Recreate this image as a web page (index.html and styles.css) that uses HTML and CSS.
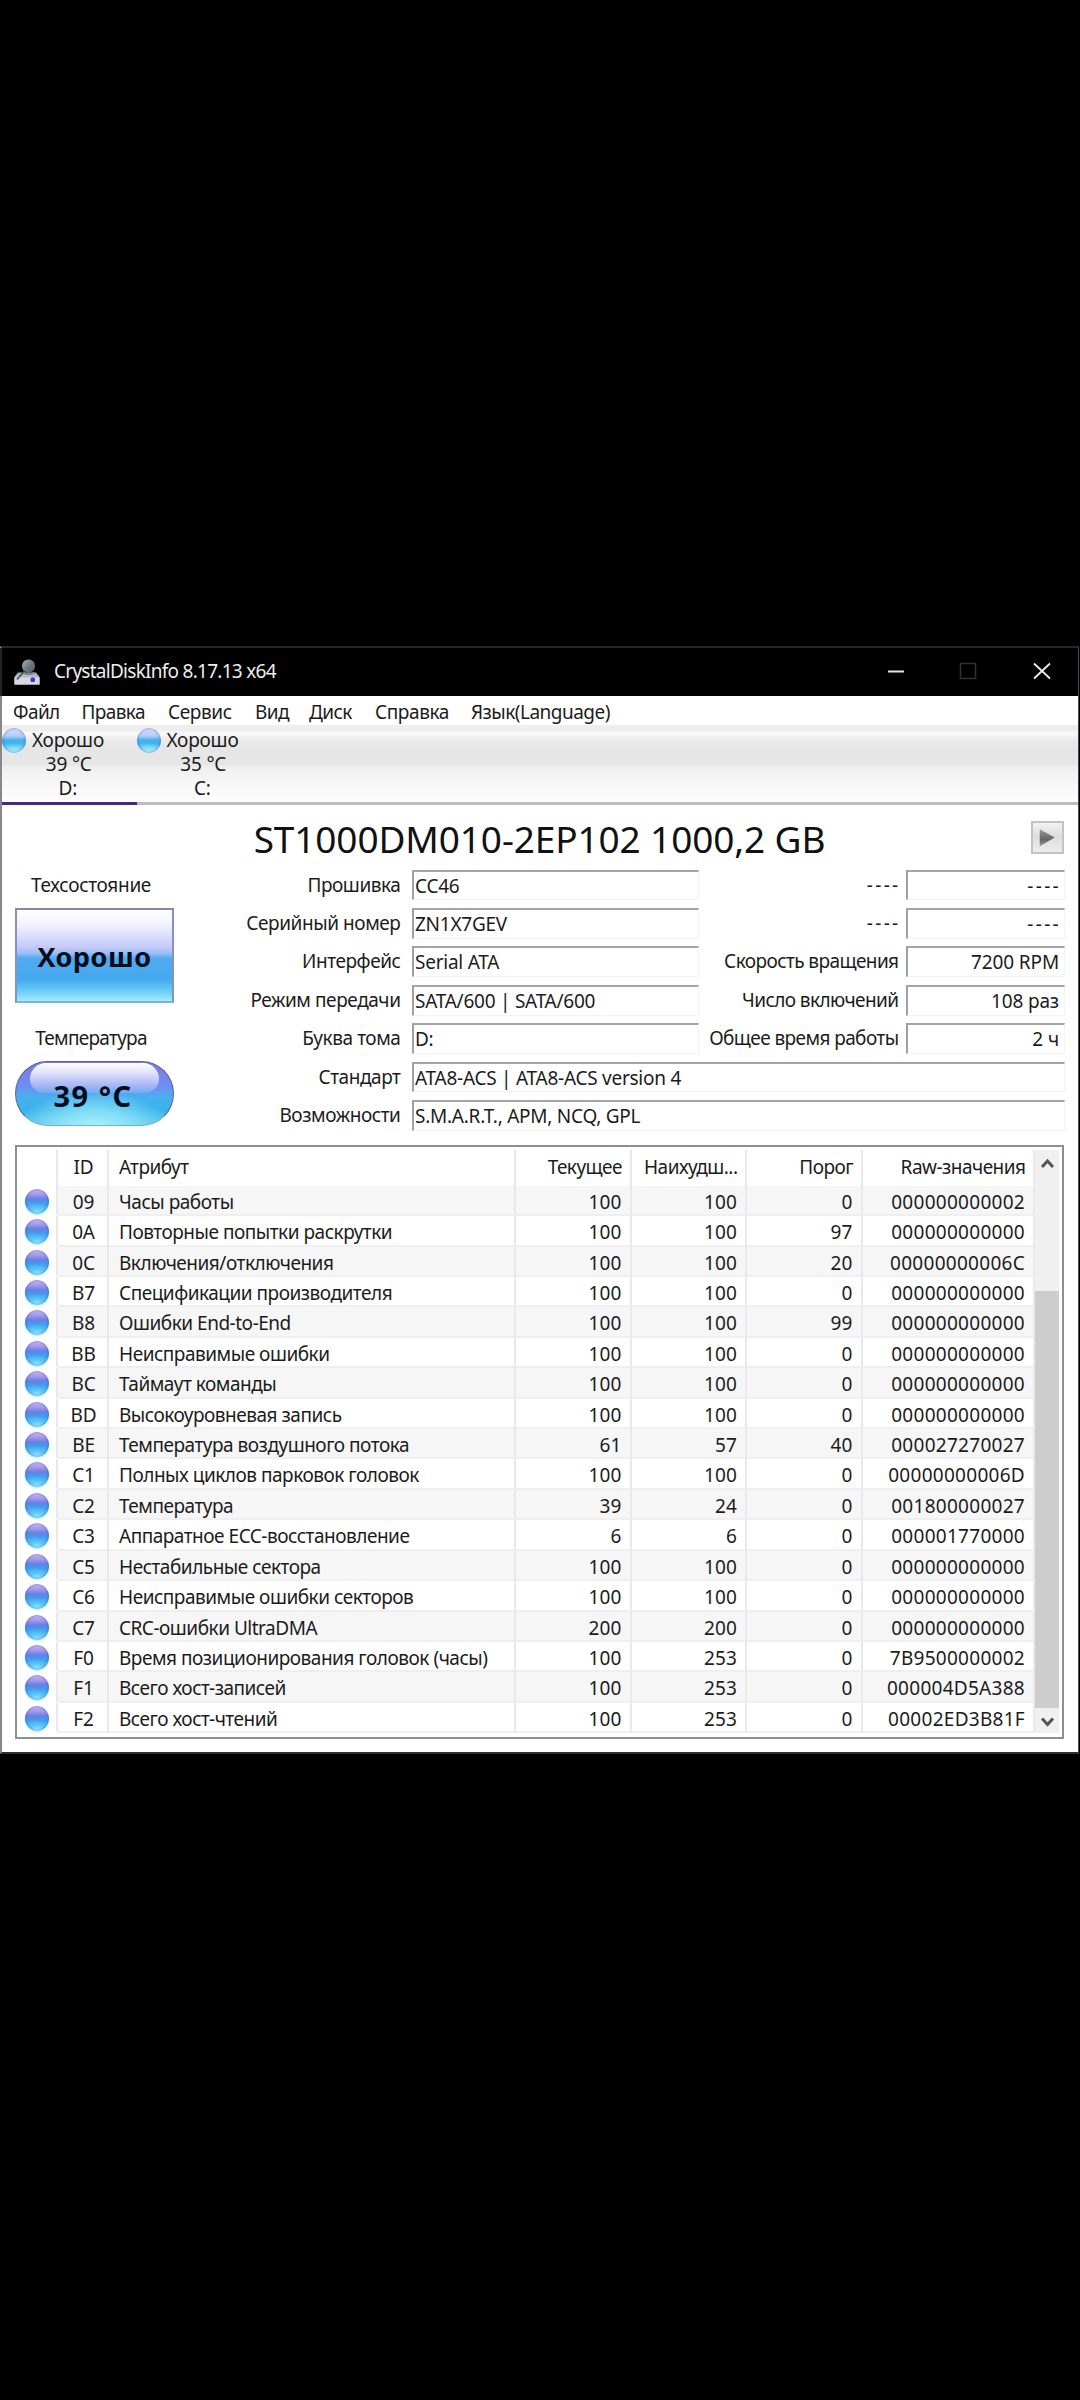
FILE: index.html
```
<!DOCTYPE html>
<html lang="ru">
<head>
<meta charset="utf-8">
<title>CrystalDiskInfo 8.17.13 x64</title>
<link rel="stylesheet" href="styles.css">
</head>
<body>
<div class="window">
  <header class="titlebar">
    <svg class="app-icon" viewBox="0 0 26 26">
      <defs>
        <linearGradient id="ball" x1="0" y1="0" x2="1" y2="1"><stop offset="0" stop-color="#a9b6bd"/><stop offset=".5" stop-color="#6f7b83"/><stop offset="1" stop-color="#4e565d"/></linearGradient>
        <linearGradient id="drive" x1="0" y1="0" x2="0" y2="1"><stop offset="0" stop-color="#a9aab6"/><stop offset="1" stop-color="#d6d6e2"/></linearGradient>
      </defs>
      <path d="M4 13.5H22L25.5 18V25.5H.5V18Z" fill="url(#drive)"/>
      <circle cx="14.5" cy="7" r="6.6" fill="url(#ball)"/>
      <path d="M9.5 13.5q5 3.500 10.500 0" fill="none" stroke="#777d88" stroke-width="1.600"/>
      <path d="M.5 18.500H25.500V25.500H.5Z" fill="#d6d6e4"/>
      <path d="M10 12.500 3 20.500" stroke="#4b4e58" stroke-width="1.600"/>
      <rect x="16.500" y="18.500" width="4.500" height="4.500" rx="1.500" fill="#3b37c4"/>
    </svg>
    <span class="title">CrystalDiskInfo 8.17.13 x64</span>
    <svg class="win-buttons" viewBox="0 0 180 20">
      <path d="M8 10.500H24" stroke="#e8e8e8" stroke-width="2"/>
      <rect x="80.500" y="2.500" width="15" height="15" fill="none" stroke="#303030" stroke-width="1.500"/>
      <path d="M154 2.500 170 17.500M170 2.500 154 17.500" stroke="#ededed" stroke-width="1.800"/>
    </svg>
  </header>
  <nav class="menu">
    <span class="m1">Файл</span><span class="m2">Правка</span><span class="m3">Сервис</span><span class="m4">Вид</span><span class="m5">Диск</span><span class="m6">Справка</span><span class="m7">Язык(Language)</span>
  </nav>
  <div class="drives">
    <div class="drive active"><div class="state"><i class="orb light"></i>Хорошо</div><div class="temp">39 °C</div><div class="letter">D:</div></div>
    <div class="drive"><div class="state"><i class="orb light"></i>Хорошо</div><div class="temp">35 °C</div><div class="letter">C:</div></div>
  </div>
  <main class="panel">
    <div class="model">
      <h1>ST1000DM010-2EP102 1000,2 GB</h1>
      <div class="next"><svg viewBox="0 0 34 34"><defs><linearGradient id="tri" x1="0" y1="0" x2="0" y2="1"><stop offset="0" stop-color="#999"/><stop offset=".6" stop-color="#666"/><stop offset="1" stop-color="#999"/></linearGradient></defs><path d="M9 8.500 24.500 17 9 26Z" fill="url(#tri)"/></svg></div>
    </div>
    <section class="info">
      <aside class="status">
        <div class="caption">Техсостояние</div>
        <div class="health">Хорошо</div>
        <div class="caption second">Температура</div>
        <div class="pill"><i class="gloss"></i><span>39 °C</span></div>
      </aside>
      <div class="fields">
        <label>Прошивка</label><div class="field">CC46</div><label class="r dash">----</label><div class="field num dash">----</div>
        <label>Серийный номер</label><div class="field">ZN1X7GEV</div><label class="r dash">----</label><div class="field num dash">----</div>
        <label>Интерфейс</label><div class="field">Serial ATA</div><label class="r">Скорость вращения</label><div class="field num">7200 RPM</div>
        <label>Режим передачи</label><div class="field">SATA/600 | SATA/600</div><label class="r">Число включений</label><div class="field num">108 раз</div>
        <label>Буква тома</label><div class="field">D:</div><label class="r">Общее время работы</label><div class="field num">2 ч</div>
        <label>Стандарт</label><div class="field wide">ATA8-ACS | ATA8-ACS version 4</div>
        <label>Возможности</label><div class="field wide">S.M.A.R.T., APM, NCQ, GPL</div>
      </div>
    </section>
    <section class="smart">
      <div class="table">
        <div class="row head"><span></span><span class="id">ID</span><span class="name">Атрибут</span><span class="h">Текущее</span><span class="h">Наихудш...</span><span class="h">Порог</span><span class="h raw">Raw-значения</span></div>
        <div id="rows"></div>
      </div>
      <div class="scroll">
        <svg viewBox="0 0 24 28"><path d="M7 17 12.500 11 18 17" fill="none" stroke="#555" stroke-width="3"/></svg>
        <div class="track"><div class="thumb"></div></div>
        <svg viewBox="0 0 24 28"><path d="M7 13.500 12.500 19.500 18 13.500" fill="none" stroke="#555" stroke-width="3"/></svg>
      </div>
    </section>
  </main>
</div>
<script src="rows.js"></script>
</body>
</html>
```
FILE: styles.css
```
* { box-sizing: border-box; }
body { margin: 0; height: 2400px; padding-top: 646px; background: #000; font: 19px/24px "Noto Sans", "Open Sans", sans-serif; letter-spacing: -.5px; color: #1c1c20; white-space: nowrap; overflow: hidden; }
.window { width: 1079px; height: 1108px; border-style: solid; border-color: #25262a #4a4a4e #2c2f36 #88888b; border-width: 2px 1px 2px 2px; background: #fff; display: flex; flex-direction: column; }

.titlebar { height: 48px; background: #000; display: flex; align-items: center; padding-left: 12px; margin-left: -2px; border-left: 2px solid #222; flex: none; }
.app-icon { width: 26px; height: 26px; }
.title { color: #ededed; letter-spacing: -.73px; margin-left: 14px; line-height: 47px; height: 48px; }
.win-buttons { width: 180px; height: 20px; margin: 0 18px 2px auto; }

.menu { height: 29px; display: flex; line-height: 32px; padding-left: 11px; }
.menu span { flex: none; letter-spacing: -.6px; }
.m1 { width: 68.500px; } .m2 { width: 86.500px; } .m3 { width: 87px; } .m4 { width: 54px; } .m5 { width: 66px; } .m6 { width: 96px; }
.menu .m3, .menu .m6 { letter-spacing: -.4px; }
.menu .m7 { letter-spacing: -.52px; }

.drives { height: 80px; flex: none; display: flex; border-bottom: 3px solid #bdbdbf; background: linear-gradient(#eee 0, #eee 5px, #f8f8f8 8px, #eaeaea 16px, #e6e6e6 22px, #e6e6e6 39px, #efefef 42px, #f6f6f6 56px, #fdfdfd 76px); }
.drive { width: 134.500px; height: 80px; border-bottom: 3px solid transparent; text-align: center; line-height: 24.200px; padding-top: 3px; }
.drive.active { border-color: #4b2682; }
.state { display: flex; align-items: center; height: 24px; letter-spacing: -.2px; }
.state .orb { margin: 0 6px 0 0; }
.temp, .letter { letter-spacing: -.2px; padding-right: 1px; line-height: 25px; height: 24.200px; }
.letter { padding-right: 3px; }

.orb { display: block; flex: none; width: 24px; height: 25px; border-radius: 50%; background: radial-gradient(ellipse 75% 45% at 50% 100%, #a2f2ff 0, rgba(120, 215, 255, .5) 50%, transparent 100%), linear-gradient(#c9b6f2 4%, #9f95ea 24%, #6480e6 40%, #3fa0ec 58%, #45bdf4 85%); box-shadow: inset 0 0 3px rgba(40, 50, 170, .6), 0 1px 2px rgba(120, 215, 255, .6); }
.orb.light { background: radial-gradient(ellipse 75% 42% at 50% 100%, #b5f2ff 0, transparent 100%), linear-gradient(#d5dcfa 5%, #b3cdf8 32%, #45b1ee 48%, #3fb4ec 65%, #7ddcf8); box-shadow: inset 0 0 3px rgba(50, 80, 170, .7); }

.panel { padding: 16px 14px 13px 13px; display: flex; flex-direction: column; flex: 1; }
.model { display: flex; height: 33px; margin-bottom: 15.700px; padding-left: 33px; }
.model h1 { margin: 0; flex: 1; text-align: center; font-weight: 400; font-size: 37px; line-height: 36px; letter-spacing: -.12px; color: #111; }
.next { width: 33px; height: 33px; border: 2px solid #c3c3c3; background: linear-gradient(#f2f2f2, #ddd 45%, #ececec); }
.next svg { display: block; width: 33px; height: 33px; margin: -2px; }

.info { display: grid; grid-template-columns: 159px 1fr; height: 261px; flex: none; }
.status { text-align: center; }
.caption { height: 30.700px; line-height: 30px; letter-spacing: -.3px; padding-right: 7px; }
.second { margin-top: 20px; letter-spacing: -.7px; }
.health { margin-top: 7.600px; height: 95px; border: 2px solid; border-color: #8587ad #8292c4 #72b8dc #8292c4; background: linear-gradient(#fff, #f0effd 18%, #c6cbf9 40%, #9fc0f6 47%, #52aaef 53%, #45a9ee 76%, #67c9f5 88%, #a6e9fb); font-weight: 700; font-size: 27px; line-height: 93px; letter-spacing: .6px; color: #050d1c; }
.pill { position: relative; margin-top: 7.700px; height: 64.500px; border-radius: 33px; border: 1px solid #5560a0; border-bottom-color: #6ab4d4; background: radial-gradient(ellipse 50% 62% at 50% 108%, #aef2fd, rgba(150, 232, 251, .75) 50%, transparent), linear-gradient(#8379dc, #6f8df0 38%, #48b0ee 56%, #38b4ea 75%, #5cc4ee); font-weight: 700; font-size: 29px; line-height: 67px; letter-spacing: 1.500px; color: #050d1c; }
.pill span { position: relative; margin-left: -3px; }
.gloss { position: absolute; left: 14px; right: 14px; top: 1px; height: 30px; border-radius: 18px 18px 16px 16px; background: linear-gradient(#fff, rgba(240, 240, 255, .85) 35%, rgba(180, 205, 250, .25)); }

.fields { display: grid; grid-template-columns: 238px 287px 206.500px 159.500px; grid-auto-rows: 30.700px; row-gap: 7.700px; line-height: 30px; }
.fields label { text-align: right; padding-right: 11.500px; letter-spacing: -.43px; }
.fields label.r { padding-right: 7px; justify-self: end; letter-spacing: -.58px; }
.field { border: 1px solid #f3f3f3; border-top: 2px solid #a5a5a5; border-left: 2px solid #a0a0a0; padding: 0 1px; line-height: 28px; letter-spacing: -.25px; }
.num { text-align: right; padding-right: 5px; letter-spacing: -.12px; }
.fields .dash, .fields label.dash { letter-spacing: 2.300px; padding-right: 3px; }
.fields label.dash { padding-right: 5px; }
.wide { grid-column: span 3; }

.smart { flex: none; margin-top: 14px; height: 594px; border: 2px solid #8d8f90; display: flex; padding: 3px 3px 4px 0; }
.table { width: 1018px; }
.row { display: grid; grid-template-columns: 41px 51px 407px 115.500px 115.500px 115.500px 172.500px; height: 30.430px; line-height: 32px; }
.row > span { border-right: 2px solid #e9e9eb; border-bottom: 2px solid #efeff0; padding-right: 8px; text-align: right; height: 30.430px; }
.row > span:first-child { border-bottom-color: transparent; padding: 3px 0 0 8px; }
.row > .id { text-align: center; padding: 0 0 0 2px; letter-spacing: -.2px; }
.row > .name { text-align: left; padding: 0 0 0 10px; letter-spacing: -.48px; }
.row > .n { letter-spacing: .1px; }
.row > .x { letter-spacing: .28px; }
.row.odd > span:not(:first-child) { background: #f6f6f7; }
.row.head, .row.head > span { height: 36px; line-height: 34px; }
.row.head > span { border-bottom: 0; }
.row.head > .h { padding-right: 7.500px; letter-spacing: -.52px; }
.scroll { width: 24px; margin-left: auto; background: #f0f0f0; display: flex; flex-direction: column; }
.scroll svg { width: 24px; height: 28px; flex: none; }
.track { flex: 1; padding-top: 113px; margin-bottom: -3px; display: flex; }
.thumb { flex: 1; background: #cdcdcd; }
```
FILE: rows.js
```
const attributes = [
  ["09", "Часы работы", 100, 100, 0, "000000000002"],
  ["0A", "Повторные попытки раскрутки", 100, 100, 97, "000000000000"],
  ["0C", "Включения/отключения", 100, 100, 20, "00000000006C"],
  ["B7", "Спецификации производителя", 100, 100, 0, "000000000000"],
  ["B8", "Ошибки End-to-End", 100, 100, 99, "000000000000"],
  ["BB", "Неисправимые ошибки", 100, 100, 0, "000000000000"],
  ["BC", "Таймаут команды", 100, 100, 0, "000000000000"],
  ["BD", "Высокоуровневая запись", 100, 100, 0, "000000000000"],
  ["BE", "Температура воздушного потока", 61, 57, 40, "000027270027"],
  ["C1", "Полных циклов парковок головок", 100, 100, 0, "00000000006D"],
  ["C2", "Температура", 39, 24, 0, "001800000027"],
  ["C3", "Аппаратное ECC-восстановление", 6, 6, 0, "000001770000"],
  ["C5", "Нестабильные сектора", 100, 100, 0, "000000000000"],
  ["C6", "Неисправимые ошибки секторов", 100, 100, 0, "000000000000"],
  ["C7", "CRC-ошибки UltraDMA", 200, 200, 0, "000000000000"],
  ["F0", "Время позиционирования головок (часы)", 100, 253, 0, "7B9500000002"],
  ["F1", "Всего хост-записей", 100, 253, 0, "000004D5A388"],
  ["F2", "Всего хост-чтений", 100, 253, 0, "00002ED3B81F"]
];

document.getElementById("rows").innerHTML = attributes.map(([id, name, current, worst, threshold, raw], i) =>
  `<div class="row${i % 2 ? "" : " odd"}"><span><i class="orb"></i></span><span class="id">${id}</span>` +
  `<span class="name">${name}</span><span class="n">${current}</span><span class="n">${worst}</span>` +
  `<span class="n">${threshold}</span><span class="x">${raw}</span></div>`
).join("");
```
